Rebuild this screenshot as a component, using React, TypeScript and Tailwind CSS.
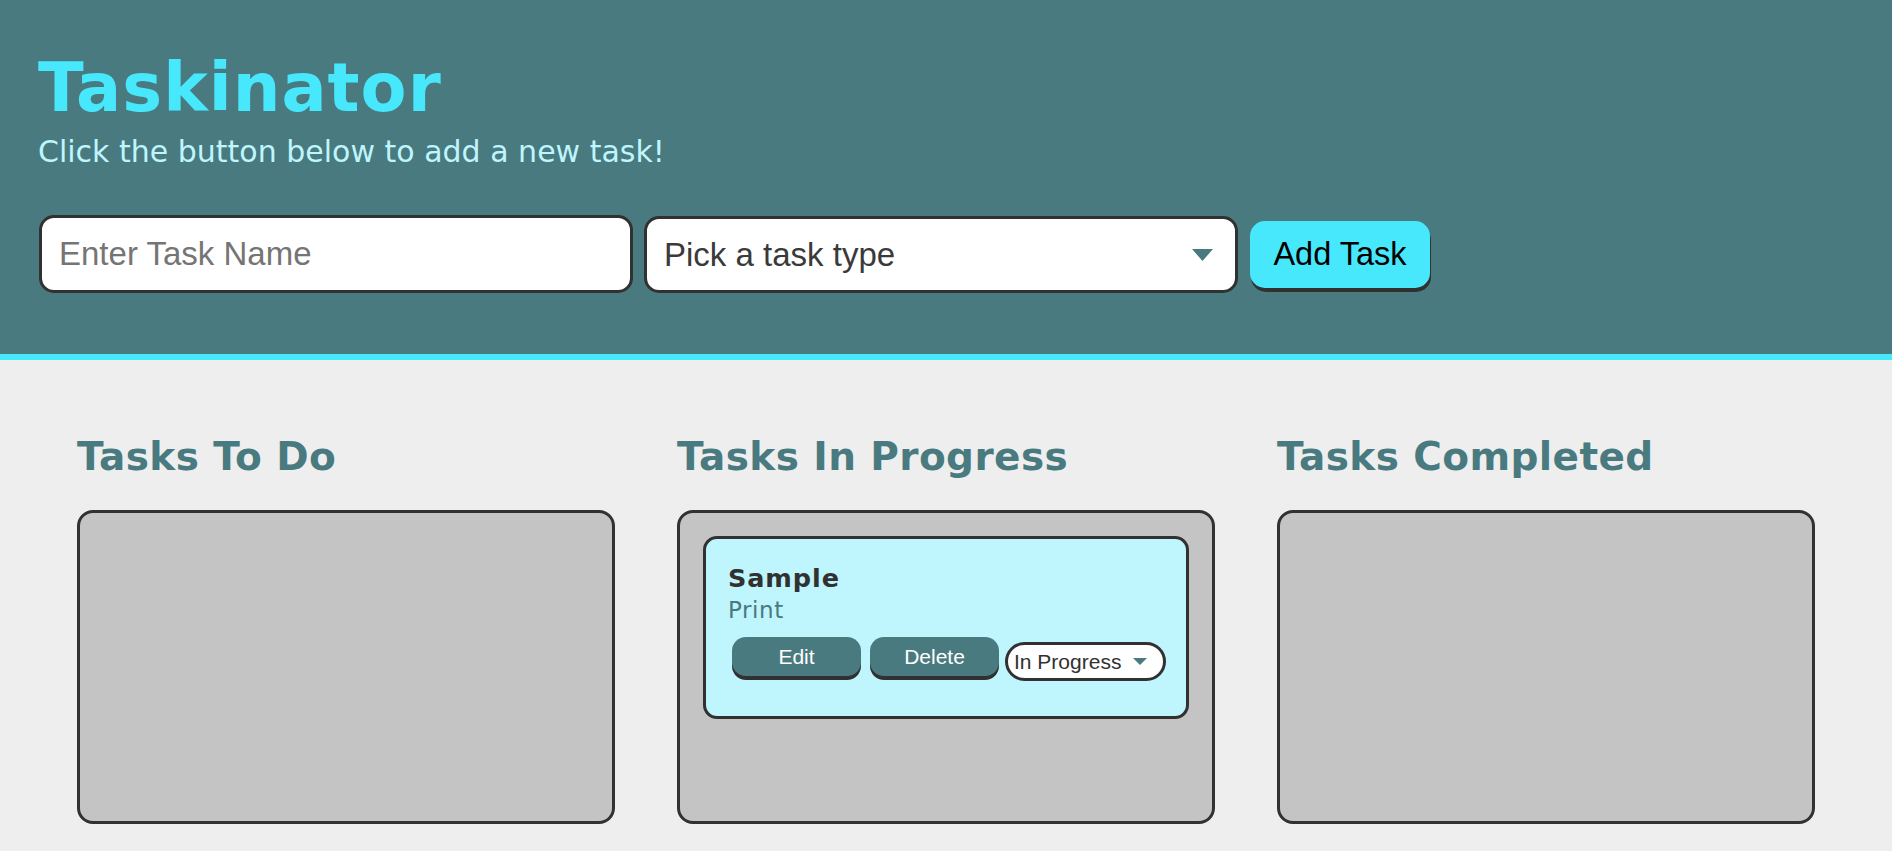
import React from "react";

const Caret = ({ w, h }: { w: number; h: number }) => (
  <svg width={w} height={h} viewBox={`0 0 ${w} ${h}`} className="shrink-0">
    <polygon points={`0,0 ${w},0 ${w / 2},${h}`} fill="#497a80" />
  </svg>
);

function Column({ title, children }: { title: string; children?: React.ReactNode }) {
  return (
    <div className="flex flex-col">
      <h2 className="text-[39px] leading-[39px] tracking-[0.4px] font-bold text-[#497a80] font-['DejaVu_Sans',Verdana,sans-serif] whitespace-nowrap">
        {title}
      </h2>
      <div className="mt-[34px] h-[314px] border-[3px] border-[#313131] rounded-[16px] bg-[#c4c4c4] p-[23px]">
        {children}
      </div>
    </div>
  );
}

export default function App() {
  return (
    <div className="min-h-screen w-full bg-[#eeeeee]">
      <header className="bg-[#497a80] border-b-[6px] border-[#48e8fc] pl-[38px] pt-[55px] pb-[61px]">
        <h1 className="text-[67px] leading-[66px] tracking-[1px] font-bold text-[#48e8fc] font-['DejaVu_Sans',Verdana,sans-serif]">
          Taskinator
        </h1>
        <p className="mt-[16px] text-[30px] leading-[30px] text-[#bff5fc] font-['DejaVu_Sans',Verdana,sans-serif]">
          Click the button below to add a new task!
        </p>
        <div className="mt-[48px] flex items-start gap-[11px] ml-[1px] font-['Liberation_Sans',Arial,sans-serif]">
          <input
            type="text"
            placeholder="Enter Task Name"
            className="w-[594px] h-[78px] border-[3px] border-[#313131] rounded-[15px] bg-white px-[17px] text-[33px] text-[#313131] placeholder:text-[#757575] outline-none font-['Liberation_Sans',Arial,sans-serif]"
          />
          <div className="w-[594px] h-[77px] mt-[1px] border-[3px] border-[#313131] rounded-[15px] bg-white pl-[17px] pr-[22px] flex items-center justify-between text-[33px] text-[#3a3a3a]">
            <span>Pick a task type</span>
            <Caret w={21} h={12} />
          </div>
          <button className="ml-[1px] mt-[6px] w-[180px] h-[67px] rounded-[15px] bg-[#48e8fc] text-[32.5px] text-black shadow-[1px_4px_0_#313131] font-['Liberation_Sans',Arial,sans-serif]">
            Add Task
          </button>
        </div>
      </header>
      <main className="px-[77px] pt-[77px] grid grid-cols-3 gap-x-[62px]">
        <Column title="Tasks To Do" />
        <Column title="Tasks In Progress">
          <div className="border-[3px] border-[#313131] rounded-[14px] bg-[#bff5fc] pl-[22px] pt-[27px] pb-[35px]">
            <h3 className="text-[25.5px] leading-[25px] tracking-[0.9px] font-bold text-[#313131] font-['DejaVu_Sans',Verdana,sans-serif]">
              Sample
            </h3>
            <p className="mt-[8px] text-[23px] leading-[23px] tracking-[0.6px] text-[#497a80] font-['DejaVu_Sans',Verdana,sans-serif]">
              Print
            </p>
            <div className="mt-[15px] ml-[4px] flex items-start font-['Liberation_Sans',Arial,sans-serif]">
              <button className="w-[129px] h-[39px] rounded-[14px] bg-[#497a80] text-white text-[21px] shadow-[0_4px_0_#313131]">
                Edit
              </button>
              <button className="ml-[9px] w-[129px] h-[39px] rounded-[14px] bg-[#497a80] text-white text-[21px] shadow-[0_4px_0_#313131]">
                Delete
              </button>
              <div className="ml-[6px] mt-[5px] w-[161px] h-[39px] border-[3px] border-[#313131] rounded-[20px] bg-white pl-[6px] pr-[16px] flex items-center justify-between text-[21px] text-[#313131]">
                <span>In Progress</span>
                <Caret w={14} h={7} />
              </div>
            </div>
          </div>
        </Column>
        <Column title="Tasks Completed" />
      </main>
    </div>
  );
}
